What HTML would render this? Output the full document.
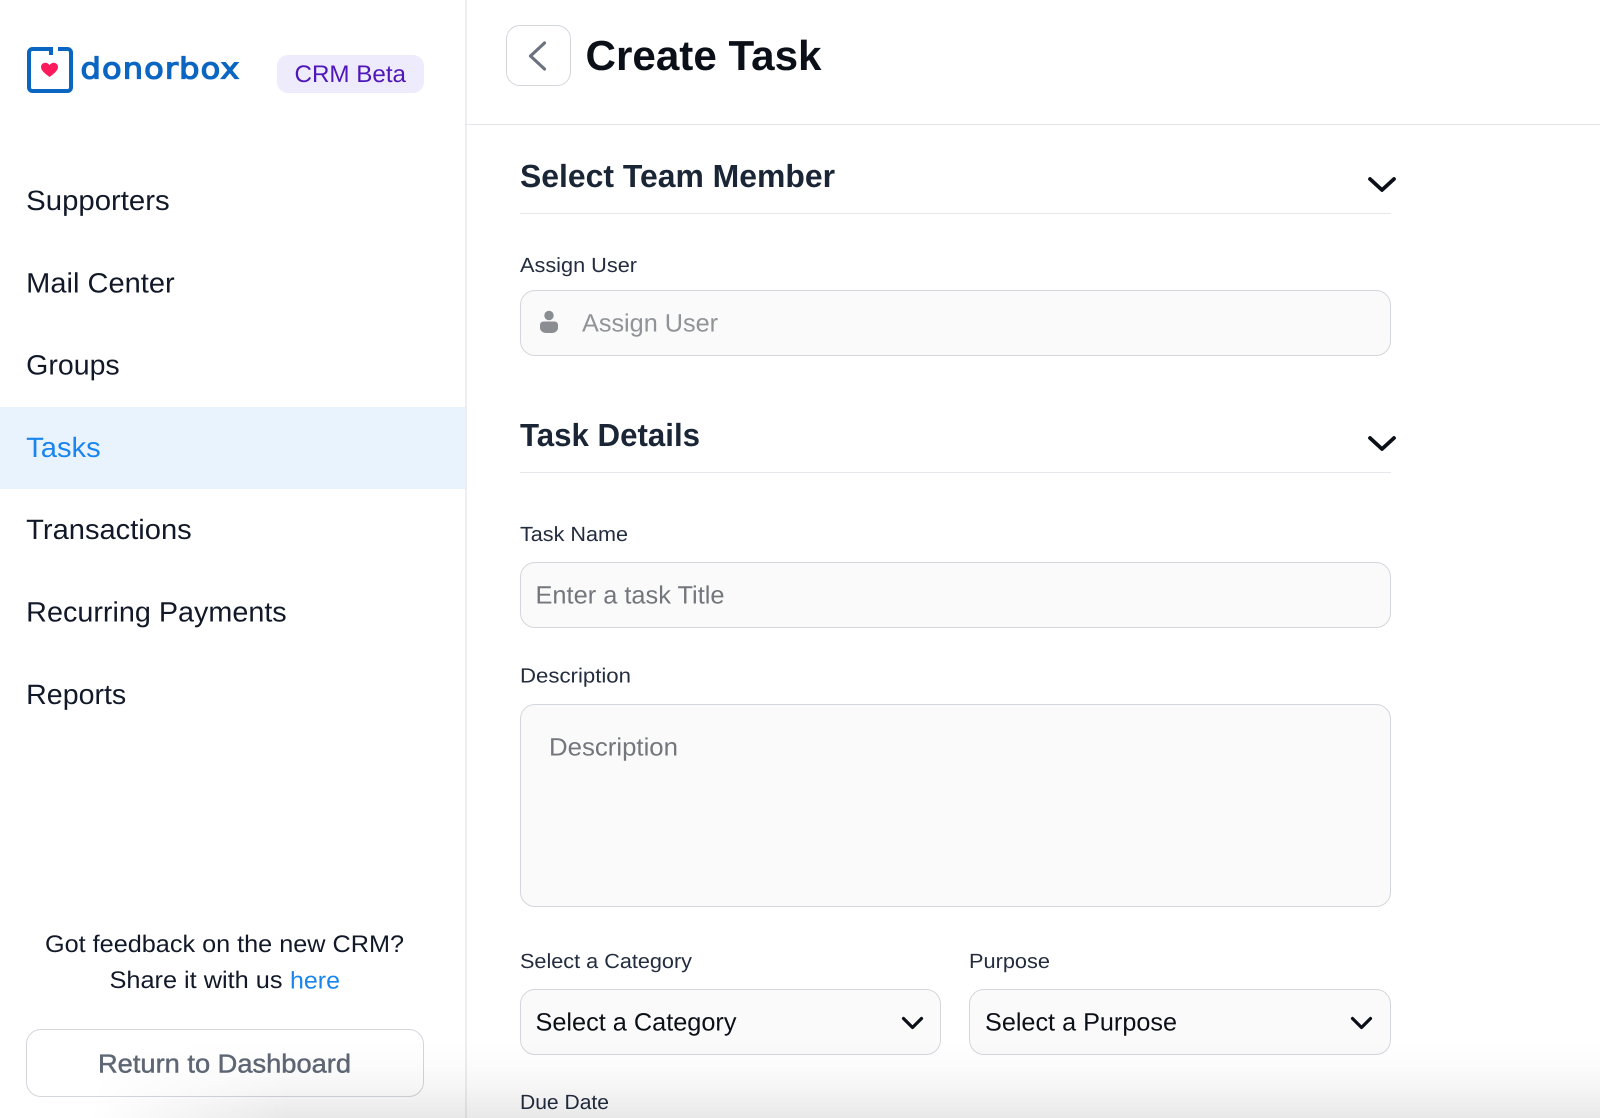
<!DOCTYPE html>
<html lang="en">
<head>
<meta charset="utf-8">
<title>Create Task</title>
<style>
html,body{margin:0;padding:0;background:#fff;width:1600px;height:1118px;overflow:hidden}
#page{position:relative;width:1600px;height:1118px;overflow:hidden;background:#fff;font-family:"Liberation Sans",sans-serif;filter:blur(.3px)}
.box{position:absolute;box-sizing:border-box}
.field{background:#fafafa;border:1.500px solid #d3d6dc;border-radius:15px}
svg{position:absolute;left:0;top:0}
text{font-family:"Liberation Sans",sans-serif;text-rendering:geometricPrecision;white-space:pre}
#shade{position:absolute;left:0;top:1040px;width:1600px;height:78px;pointer-events:none;
background:linear-gradient(to bottom,rgba(0,0,0,0) 0%,rgba(0,0,0,.012) 30%,rgba(0,0,0,.035) 60%,rgba(0,0,0,.09) 100%);
-webkit-mask-image:linear-gradient(to right,transparent 90px,#000 290px);mask-image:linear-gradient(to right,transparent 90px,#000 290px)}
</style>
</head>
<body>
<div id="page">
  <div class="box" style="left:465px;top:0;width:1.5px;height:1118px;background:#eceef1"></div>
  <div class="box" style="left:465px;top:123.5px;width:1135px;height:1.5px;background:#e5e7eb"></div>
  <div class="box" style="left:0;top:407px;width:465px;height:82px;background:#e9f3fe"></div>
  <div class="box" style="left:277px;top:55px;width:147px;height:38px;background:#eeebfc;border-radius:11px"></div>
  <div class="box" style="left:506px;top:25px;width:65px;height:61px;border:1.5px solid #d3d6dc;border-radius:14px;background:#fff"></div>
  <div class="box" style="left:520px;top:212.5px;width:871px;height:1.5px;background:#e5e7eb"></div>
  <div class="box" style="left:520px;top:471.5px;width:871px;height:1.5px;background:#e5e7eb"></div>
  <div class="box field" style="left:520px;top:290px;width:871px;height:66px"></div>
  <div class="box field" style="left:520px;top:562px;width:871px;height:66px"></div>
  <div class="box field" style="left:520px;top:704px;width:871px;height:203px"></div>
  <div class="box field" style="left:520px;top:989px;width:421px;height:66px"></div>
  <div class="box field" style="left:969px;top:989px;width:422px;height:66px"></div>
  <div class="box" style="left:26px;top:1029px;width:397.5px;height:68px;border:1.5px solid #d3d6dc;border-radius:15px;background:#fff"></div>

  <svg width="1600" height="1118" viewBox="0 0 1600 1118" xmlns="http://www.w3.org/2000/svg">
    <!-- logo -->
    <path d="M58 49h9.500a3.500 3.500 0 0 1 3.500 3.500v35a3.500 3.500 0 0 1-3.500 3.500H32.500a3.500 3.500 0 0 1-3.500-3.500V52.500a3.500 3.500 0 0 1 3.500-3.500H51v6" fill="none" stroke="#0b66c2" stroke-width="4"/>
    <path d="M49.500 77c-3-2.500-8.500-5.800-8.500-10 0-2.500 1.900-4.300 4.200-4.300 1.900 0 3.500 1 4.300 2.600 .8-1.600 2.400-2.600 4.300-2.600 2.300 0 4.200 1.800 4.200 4.300 0 4.200-5.500 7.500-8.500 10z" fill="#ff1a5e"/>
    <text x="80.500" y="78.500" font-size="29" letter-spacing="1" fill="#0b66c2" stroke="#0b66c2" stroke-width="1.200" style="font-family:'DejaVu Sans',sans-serif" textLength="160" lengthAdjust="spacingAndGlyphs">donorbox</text>
    <text x="294.500" y="82" font-size="24" fill="#4f16b8" textLength="111.500" lengthAdjust="spacingAndGlyphs">CRM Beta</text>

    <!-- nav -->
    <g font-size="28" fill="#111827">
      <text x="26.200" y="210" textLength="143.500" lengthAdjust="spacingAndGlyphs">Supporters</text>
      <text x="26.200" y="292.500" textLength="148.500" lengthAdjust="spacingAndGlyphs">Mail Center</text>
      <text x="26.200" y="374.500" textLength="93.500" lengthAdjust="spacingAndGlyphs">Groups</text>
      <text x="26.200" y="457" textLength="74.500" lengthAdjust="spacingAndGlyphs" fill="#1a85ee">Tasks</text>
      <text x="26.200" y="539" textLength="165.500" lengthAdjust="spacingAndGlyphs">Transactions</text>
      <text x="26.200" y="621.500" textLength="260.500" lengthAdjust="spacingAndGlyphs">Recurring Payments</text>
      <text x="26.200" y="704" textLength="100" lengthAdjust="spacingAndGlyphs">Reports</text>
    </g>

    <!-- sidebar footer -->
    <g font-size="24" fill="#111827">
      <text x="45" y="952" textLength="359" lengthAdjust="spacingAndGlyphs">Got feedback on the new CRM?</text>
      <text x="109.500" y="988" textLength="173" lengthAdjust="spacingAndGlyphs">Share it with us</text>
      <text x="290" y="988.500" textLength="50" lengthAdjust="spacingAndGlyphs" fill="#1a85ee">here</text>
    </g>
    <text x="98" y="1072.500" font-size="26" fill="#5f6775" stroke="#5f6775" stroke-width=".45" textLength="253" lengthAdjust="spacingAndGlyphs">Return to Dashboard</text>

    <!-- header -->
    <path d="M544.500 43L530.500 56l14 13" fill="none" stroke="#6b7280" stroke-width="3.200" stroke-linecap="round" stroke-linejoin="round"/>
    <text x="585.500" y="70" font-size="42" font-weight="700" fill="#0b0f17" textLength="236" lengthAdjust="spacingAndGlyphs">Create Task</text>

    <!-- section headings -->
    <g font-size="32" font-weight="700" fill="#1a2536">
      <text x="520" y="187" textLength="315" lengthAdjust="spacingAndGlyphs">Select Team Member</text>
      <text x="520" y="446" textLength="180" lengthAdjust="spacingAndGlyphs">Task Details</text>
    </g>
    <g fill="none" stroke="#0b0f17" stroke-width="3.800" stroke-linecap="round" stroke-linejoin="round">
      <path d="M1370 179l12 11 12-11"/>
      <path d="M1370 438l12 11 12-11"/>
    </g>

    <!-- labels -->
    <g font-size="20.500" fill="#232d3f">
      <text x="520" y="272" textLength="117" lengthAdjust="spacingAndGlyphs">Assign User</text>
      <text x="520" y="541" textLength="108" lengthAdjust="spacingAndGlyphs">Task Name</text>
      <text x="520" y="682.500" textLength="111" lengthAdjust="spacingAndGlyphs">Description</text>
      <text x="520" y="968" textLength="172" lengthAdjust="spacingAndGlyphs">Select a Category</text>
      <text x="969" y="968" textLength="81" lengthAdjust="spacingAndGlyphs">Purpose</text>
      <text x="520" y="1109" textLength="89" lengthAdjust="spacingAndGlyphs">Due Date</text>
    </g>

    <!-- person icon -->
    <circle cx="549" cy="315.500" r="4.700" fill="#8a8d92"/>
    <path d="M540 325c0-2 1.500-3.500 3.500-3.500h11c2 0 3.500 1.500 3.500 3.500v3c0 2.800-3 5-6 5h-6c-3 0-6-2.200-6-5z" fill="#8a8d92"/>

    <!-- placeholders -->
    <g font-size="25">
      <text x="582" y="331.500" textLength="136" lengthAdjust="spacingAndGlyphs" fill="#909398">Assign User</text>
      <text x="535.500" y="603.500" textLength="189" lengthAdjust="spacingAndGlyphs" fill="#73777d">Enter a task Title</text>
      <text x="549" y="755.500" textLength="129" lengthAdjust="spacingAndGlyphs" fill="#73777d">Description</text>
      <text x="535.500" y="1030.500" textLength="201" lengthAdjust="spacingAndGlyphs" fill="#0b0f17">Select a Category</text>
      <text x="985" y="1030.500" textLength="192" lengthAdjust="spacingAndGlyphs" fill="#0b0f17">Select a Purpose</text>
    </g>
    <g fill="none" stroke="#0b0f17" stroke-width="3.200" stroke-linecap="round" stroke-linejoin="round">
      <path d="M903.500 1018.500l9 9 9-9"/>
      <path d="M1352.500 1018.500l9 9 9-9"/>
    </g>
  </svg>
  <div id="shade"></div>
</div>
</body>
</html>
